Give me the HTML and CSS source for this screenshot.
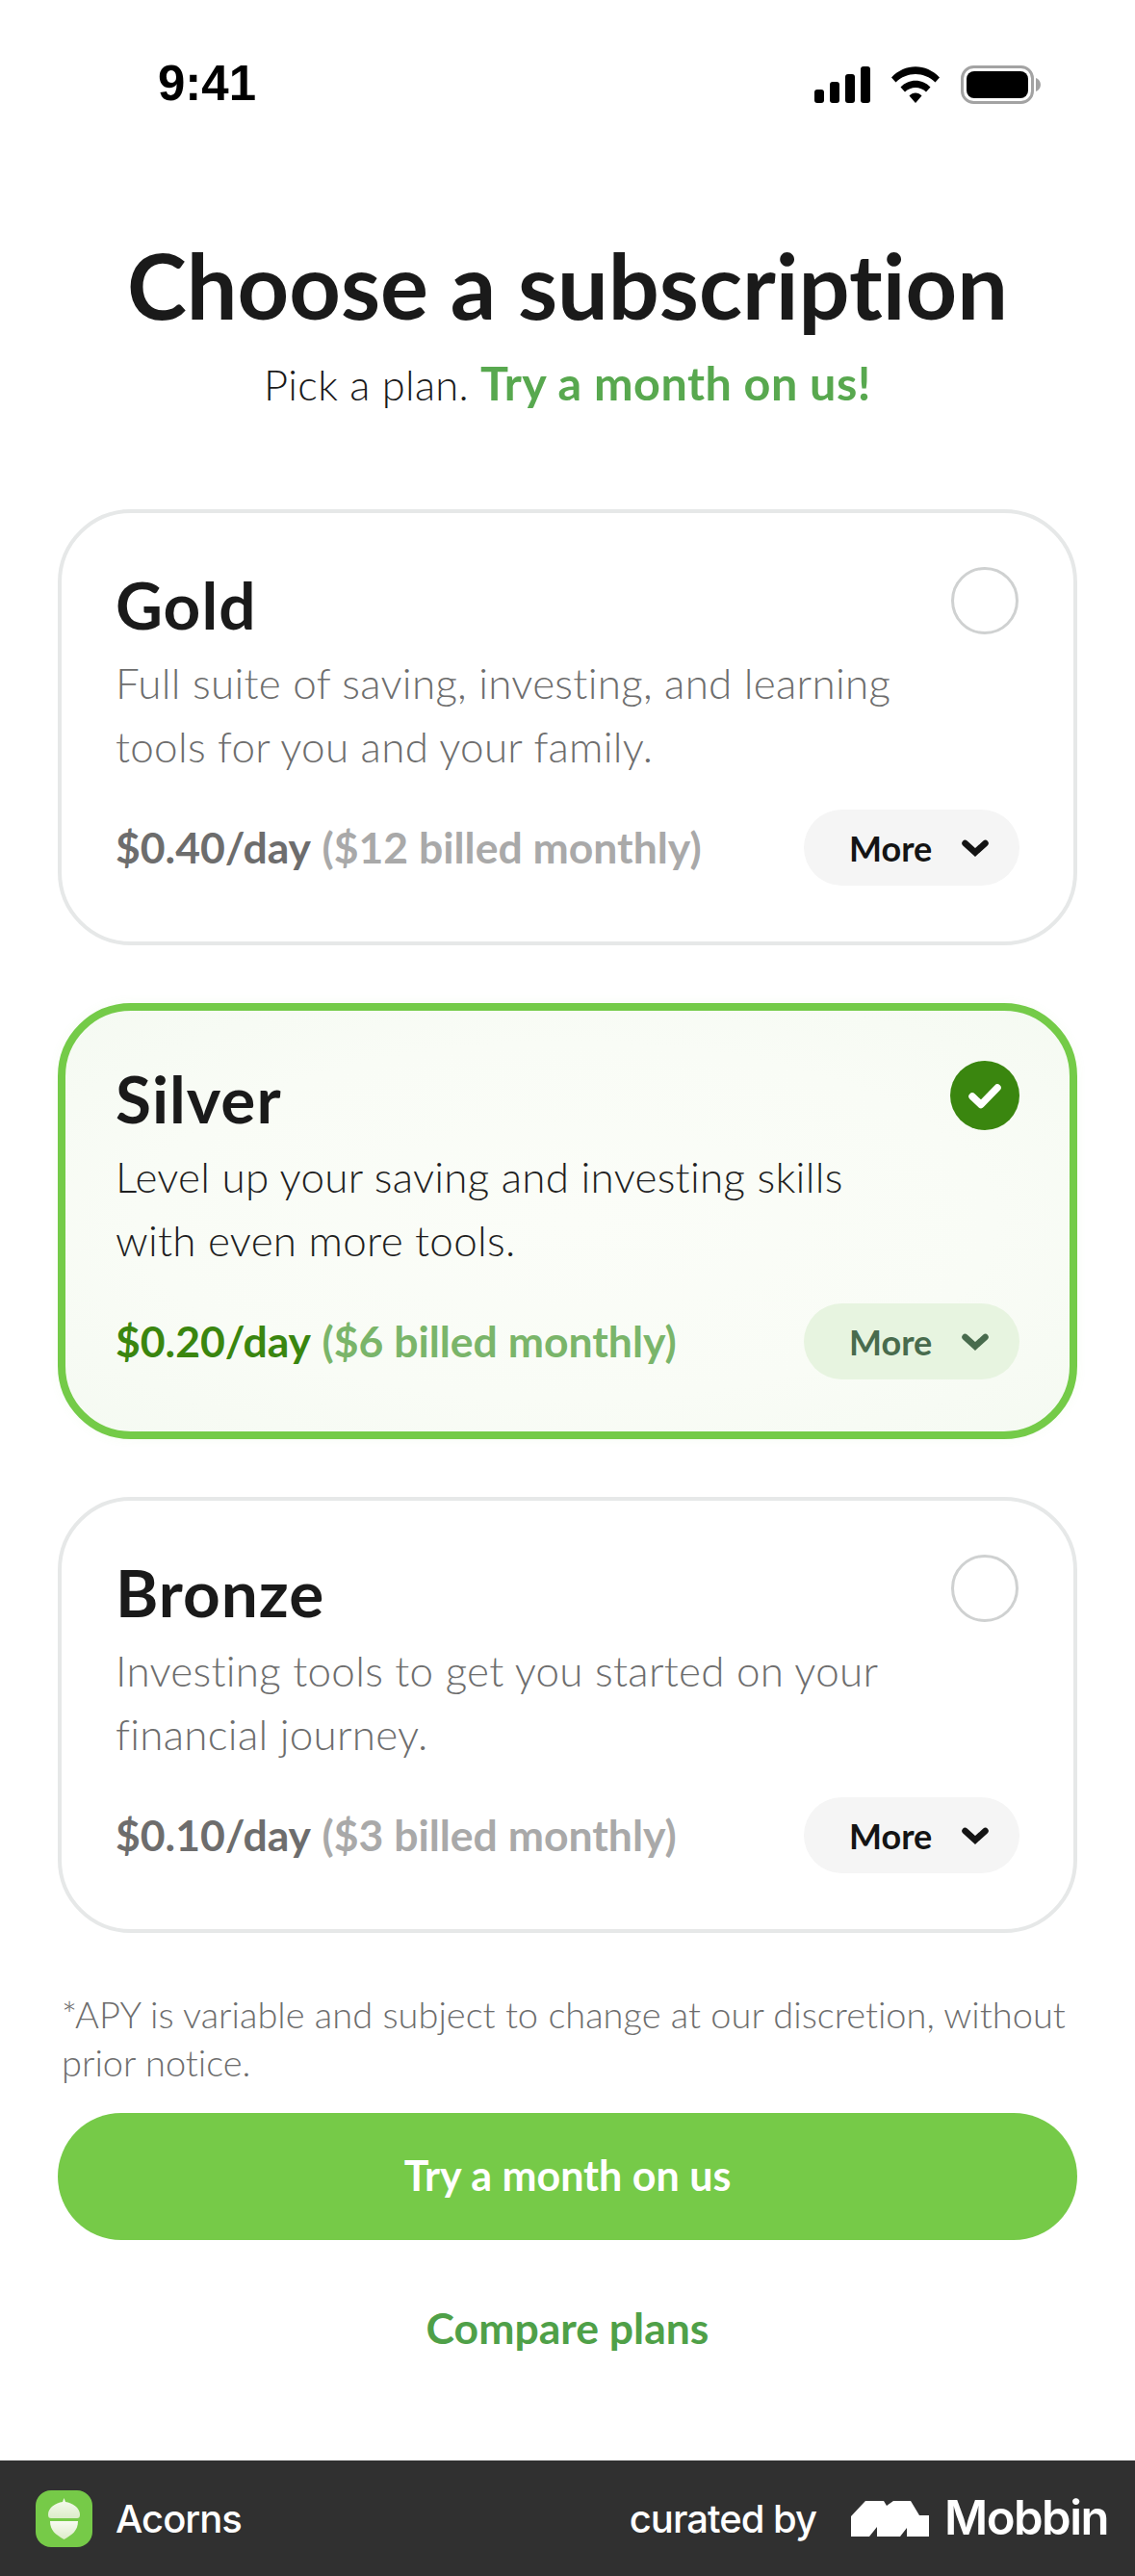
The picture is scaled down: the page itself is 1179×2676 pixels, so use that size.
FILE: index.html
```
<!DOCTYPE html>
<html lang="en">
<head>
<meta charset="utf-8">
<title>Choose a subscription</title>
<link rel="stylesheet" href="styles.css">
</head>
<body>
<div class="screen">
  <header class="status">
    <span class="time">9:41</span>
    <div class="status-icons">
      <svg class="sig" viewBox="0 0 58 38"><rect x="0" y="24" width="10" height="14" rx="3"/><rect x="16" y="16" width="10" height="22" rx="3"/><rect x="32" y="8" width="10" height="30" rx="3"/><rect x="48" y="0" width="10" height="38" rx="3"/></svg>
      <svg class="wifi" viewBox="0 0 50 38"><path d="M0 11.500C14-3.500 36-3.500 50 11.500L45.500 16.500C34 5 16 5 4.500 16.500Z"/><path d="M9.500 21.500C18 12.500 32 12.500 40.500 21.500L36 26.500C30 20.500 20 20.500 14 26.500Z"/><path d="M18.500 30.500C22 26.500 28 26.500 31.500 30.500L25 38Z"/></svg>
      <svg class="batt" viewBox="0 0 83 40"><rect x="1.500" y="1.500" width="73" height="37" rx="12" fill="none" stroke="#a3a3a3" stroke-width="3"/><rect x="6" y="6" width="64" height="28" rx="8"/><path d="M78 13C81 14 83 17 83 20C83 23 81 26 78 27Z" fill="#a3a3a3"/></svg>
    </div>
  </header>

  <main class="content">
    <h1 class="title">Choose a subscription</h1>
    <p class="sub">Pick a plan. <strong class="sub-accent">Try a month on us!</strong></p>

    <section class="plans">
      <article class="plan">
        <div class="plan-head">
          <h2 class="plan-name">Gold</h2>
          <span class="radio"></span>
        </div>
        <p class="plan-desc">Full suite of saving, investing, and learning<br>tools for you and your family.</p>
        <div class="plan-foot">
          <p class="price"><b class="price-day">$0.40/day</b> <span class="price-bill">($12 billed monthly)</span></p>
          <button class="more">More <svg class="chev" viewBox="0 0 28 18"><path d="M3.500 4L14 13.500L24.500 4" fill="none" stroke="currentColor" stroke-width="6.500" stroke-linecap="round"/></svg></button>
        </div>
      </article>

      <article class="plan plan-on">
        <div class="plan-head">
          <h2 class="plan-name">Silver</h2>
          <span class="check"><svg viewBox="0 0 72 72"><path d="M23 37L32 45.500L49 28" fill="none" stroke="#fff" stroke-width="7.500" stroke-linecap="round" stroke-linejoin="round"/></svg></span>
        </div>
        <p class="plan-desc">Level up your saving and investing skills<br>with even more tools.</p>
        <div class="plan-foot">
          <p class="price"><b class="price-day">$0.20/day</b> <span class="price-bill">($6 billed monthly)</span></p>
          <button class="more">More <svg class="chev" viewBox="0 0 28 18"><path d="M3.500 4L14 13.500L24.500 4" fill="none" stroke="currentColor" stroke-width="6.500" stroke-linecap="round"/></svg></button>
        </div>
      </article>

      <article class="plan">
        <div class="plan-head">
          <h2 class="plan-name">Bronze</h2>
          <span class="radio"></span>
        </div>
        <p class="plan-desc">Investing tools to get you started on your<br>financial journey.</p>
        <div class="plan-foot">
          <p class="price"><b class="price-day">$0.10/day</b> <span class="price-bill">($3 billed monthly)</span></p>
          <button class="more">More <svg class="chev" viewBox="0 0 28 18"><path d="M3.500 4L14 13.500L24.500 4" fill="none" stroke="currentColor" stroke-width="6.500" stroke-linecap="round"/></svg></button>
        </div>
      </article>
    </section>

    <p class="note">*APY is variable and subject to change at our discretion, without<br>prior notice.</p>
    <button class="cta">Try a month on us</button>
    <a class="compare">Compare plans</a>
  </main>

  <footer class="credit">
    <div class="credit-app">
      <span class="app-icon"><svg viewBox="0 0 59 59"><defs><linearGradient id="nut" x1="0" y1="0" x2="0" y2="1"><stop offset="0" stop-color="#f8fbf2"/><stop offset="1" stop-color="#dcecc9"/></linearGradient></defs><path d="M29.500 8L31 12C38 13 46 18 46 25C46 28 45 29 43 29H16C14 29 13 28 13 25C13 18 21 13 28 12Z" fill="url(#nut)"/><path d="M15 32H44C44 42 38 46 29.500 51C21 46 15 42 15 32Z" fill="url(#nut)"/></svg></span>
      <span class="app-name">Acorns</span>
    </div>
    <div class="credit-by">
      <span class="curated">curated by</span>
      <svg class="mob-mark" viewBox="0 0 81 37"><path d="M0 37V16L15 0H34L37 5L44 0H62L71 15H81V37H58V28L51 37H27V27L19 37Z" fill="#fff"/></svg>
      <span class="mob-name">Mobbin</span>
    </div>
  </footer>
</div>
</body>
</html>
```
FILE: styles.css
```
* { box-sizing: border-box; }
html, body { margin: 0; padding: 0; background: #fff; }
.screen {
  width: 1179px; height: 2676px; overflow: hidden;
  display: flex; flex-direction: column;
  font-family: "Lato", "Noto Sans", sans-serif; color: #1a1a1a;
  font-variant-ligatures: none;
}
.status {
  height: 175px; flex: none;
  display: flex; justify-content: space-between; align-items: flex-start;
  padding: 58px 98px 0 164px;
}
.time { font: 700 51px/58px "Liberation Sans", sans-serif; color: #000; }
.status-icons { display: flex; align-items: center; gap: 22px; padding-top: 10px; }
.sig { width: 58px; height: 38px; }
.wifi { width: 50px; height: 38px; }
.batt { width: 83px; height: 40px; }
.content { flex: 1; display: flex; flex-direction: column; padding: 0 60px; }
.title { margin: 71px 0 0; text-align: center; font-size: 93.500px; line-height: 100px; font-weight: 700; }
.sub { margin: 21px 0 0; text-align: center; font-size: 43.500px; line-height: 60px; font-weight: 300; letter-spacing: 0.300px; }
.sub-accent { font-size: 48.500px; font-weight: 700; color: #58a84f; letter-spacing: 0.500px; }
.plans { display: flex; flex-direction: column; gap: 60px; margin-top: 100px; }
.plan {
  height: 453px; border: 4px solid #e6e8e8; border-radius: 76px; background: #fff;
  padding: 56px 56px 0;
}
.plan-head { display: flex; justify-content: space-between; align-items: flex-start; height: 82px; }
.plan-name { margin: -2px 0 0; font-size: 67.500px; line-height: 82px; font-weight: 700; letter-spacing: 1px; }
.radio { width: 70px; height: 70px; margin: 0 1px 0 0; border: 3px solid #cfd1d1; border-radius: 50%; }
.plan-desc { margin: 5px 0 0; font-size: 44px; line-height: 66px; font-weight: 300; color: #6d6d6d; letter-spacing: 0.270px; }
.plan-foot { display: flex; justify-content: space-between; align-items: center; margin-top: 33px; }
.price { margin: 0 0 3px; font-size: 44.500px; }
.price-day { font-weight: 700; color: #6d6d6d; }
.price-bill { font-weight: 700; color: #a9a9a9; }
.more {
  width: 224px; height: 79px; border: 0; padding: 0 0 0 47px; border-radius: 40px; background: #f5f5f5;
  display: flex; align-items: center; gap: 31px;
  font-family: inherit; font-size: 36px; font-weight: 700; color: #141414;
}
.chev { width: 28px; height: 18px; }
.plan-on { border: 8.500px solid #74cb48; padding: 52px 52px 0; background: radial-gradient(ellipse at 50% 50%, #fbfdf8 0%, #f9fcf6 60%, #f5faf2 100%); box-shadow: 0 0 12px rgba(116, 203, 72, 0.06); }
.plan-on .plan-desc { color: #1f1f1f; }
.plan-on .price-day { color: #3a860f; }
.plan-on .price-bill { color: #7ab56a; }
.plan-on .more { background: #e7f4e0; color: #486b4d; }
.check { width: 72px; height: 72px; margin: 0; border-radius: 50%; background: #3a860f; display: block; }
.check svg { display: block; width: 72px; height: 72px; }
.note { margin: 59px 4px 0 4px; font-size: 38px; line-height: 50px; font-weight: 300; color: #6d6d6d; white-space: nowrap; }
.cta {
  height: 132px; margin-top: 28px; border: 0; padding: 0 0 4px; border-radius: 66px; background: #76ca48;
  font-family: inherit; font-size: 43px; font-weight: 700; color: #fff;
}
.compare { margin-top: 63px; text-align: center; font-size: 44.500px; line-height: 56px; font-weight: 700; color: #4fa048; }
.credit {
  height: 120px; flex: none; background: #303030; color: #fff;
  display: flex; justify-content: space-between; align-items: center; padding: 0 28px 0 37px;
  font-family: "Inter", "Liberation Sans", sans-serif;
}
.credit-app { display: flex; align-items: center; gap: 24px; }
.app-icon { width: 59px; height: 59px; border-radius: 16px; background: #76ca48; display: block; }
.app-icon svg { display: block; width: 59px; height: 59px; }
.app-name { font-size: 40px; font-weight: 500; letter-spacing: -1px; }
.credit-by { display: flex; align-items: center; }
.curated { font-size: 40px; font-weight: 500; letter-spacing: -1px; margin-right: 36px; }
.mob-mark { width: 81px; height: 37px; margin-right: 16px; }
.mob-name { font-size: 49px; font-weight: 600; letter-spacing: -1.500px; line-height: 50px; }
```
